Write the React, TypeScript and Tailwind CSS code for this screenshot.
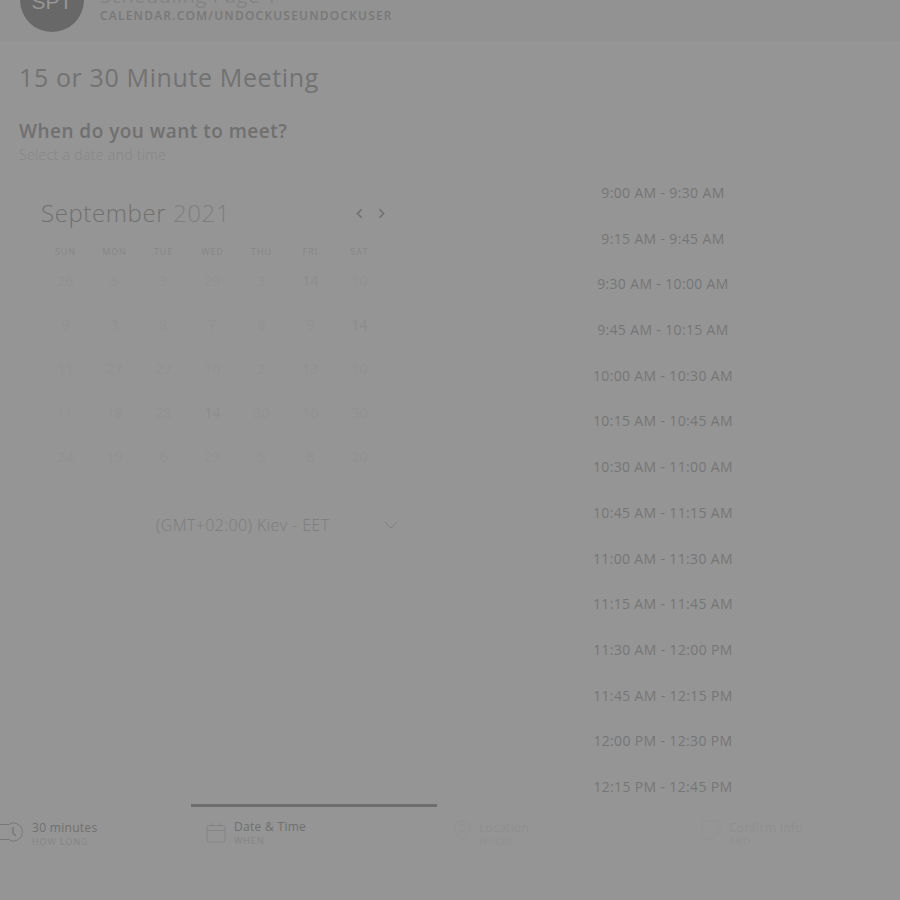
import type { ReactNode } from "react";

const weekdays = ["SUN", "MON", "TUE", "WED", "THU", "FRI", "SAT"];

const weeks = [
  [26, 8, 3, 29, 3, 14, 10],
  [9, 3, 8, 7, 8, 9, 14],
  [11, 27, 27, 10, 2, 13, 10],
  [11, 18, 28, 14, 30, 16, 30],
  [24, 19, 6, 23, 5, 8, 20],
];

const slots = [
  "9:00 AM - 9:30 AM",
  "9:15 AM - 9:45 AM",
  "9:30 AM - 10:00 AM",
  "9:45 AM - 10:15 AM",
  "10:00 AM - 10:30 AM",
  "10:15 AM - 10:45 AM",
  "10:30 AM - 11:00 AM",
  "10:45 AM - 11:15 AM",
  "11:00 AM - 11:30 AM",
  "11:15 AM - 11:45 AM",
  "11:30 AM - 12:00 PM",
  "11:45 AM - 12:15 PM",
  "12:00 PM - 12:30 PM",
  "12:15 PM - 12:45 PM",
];

function Chevron({ d, className }: { d: string; className: string }) {
  return (
    <svg viewBox="0 0 14 14" className={className} fill="none" stroke="currentColor" aria-hidden="true">
      <path d={d} />
    </svg>
  );
}

function Step({
  icon,
  title,
  caption,
  className,
  captionClass,
}: {
  icon: ReactNode;
  title: string;
  caption: string;
  className: string;
  captionClass: string;
}) {
  return (
    <button type="button" className={`flex items-start text-left ${className}`}>
      {icon}
      <span className="flex flex-col">
        <span className="text-xs leading-4 font-medium tracking-wide">{title}</span>
        <span className={`text-[9px] leading-3 tracking-widest ${captionClass}`}>{caption}</span>
      </span>
    </button>
  );
}

export default function App() {
  return (
    <div className="flex min-h-screen flex-col overflow-hidden bg-[#959595] font-['Open_Sans','Noto_Sans',sans-serif] text-[#707070]">
      <header className="flex h-[41px] items-end gap-4 overflow-hidden bg-[#929292] px-5 pb-[9px]">
        <div className="flex size-16 shrink-0 items-center justify-center rounded-full bg-[#686868] pt-1 font-['Liberation_Sans',sans-serif] text-[21px] font-medium text-[#969696]">
          SPT
        </div>
        <div className="pb-2">
          <div className="text-xl leading-6 tracking-wide text-[#848484]">Scheduling Page 1</div>
          <a href="#page" className="block text-xs leading-4 font-semibold tracking-widest text-[#787878]">
            CALENDAR.COM/UNDOCKUSEUNDOCKUSER
          </a>
        </div>
      </header>

      <main className="flex-1 px-[19px] pt-5 pb-1">
        <h1 className="text-[25px] leading-8 tracking-wide text-[#727272]">15 or 30 Minute Meeting</h1>
        <h2 className="mt-[26px] text-[19px] leading-6 font-semibold tracking-wide">When do you want to meet?</h2>
        <p className="text-sm leading-6 font-light tracking-wide text-[#868686]">Select a date and time</p>

        <div className="flex items-start">
          <section className="w-[45%] pt-[30px] pl-[22px]" aria-label="Calendar">
            <div className="flex items-center justify-between">
              <h3 className="text-2xl leading-8 font-light tracking-wide">
                September <span className="text-[#7e7e7e]">2021</span>
              </h3>
              <div className="mr-[18px] flex gap-2">
                <button type="button" aria-label="Previous month">
                  <Chevron d="M10 3 6 7l4 4" className="size-[15px] stroke-[1.5]" />
                </button>
                <button type="button" aria-label="Next month">
                  <Chevron d="m5 3 4 4-4 4" className="size-[15px] stroke-[1.5]" />
                </button>
              </div>
            </div>
            <table className="mt-3 w-[343px] table-fixed text-center">
              <thead>
                <tr className="h-[22px]">
                  {weekdays.map((day) => (
                    <th key={day} scope="col" className="text-[9px] font-normal tracking-widest text-[#868686]">
                      {day}
                    </th>
                  ))}
                </tr>
              </thead>
              <tbody>
                {weeks.map((week, row) => (
                  <tr key={row} className="h-11 align-top">
                    {week.map((day, col) => (
                      <td key={col}>
                        <button
                          type="button"
                          className={`text-sm leading-9 ${day === 14 ? "text-[#8c8c8c]" : "text-[#919191]"}`}
                        >
                          {day}
                        </button>
                      </td>
                    ))}
                  </tr>
                ))}
              </tbody>
            </table>
            <label className="mt-7 flex items-center pl-[115px]">
              <span className="sr-only">Time zone</span>
              <select className="w-[228px] appearance-none bg-transparent text-base leading-7 font-light tracking-wide text-[#7c7c7c]">
                <option>(GMT+02:00) Kiev - EET</option>
              </select>
              <Chevron d="m1 4 6 6 6-6" className="size-[14px] shrink-0 text-[#7f7f7f]" />
            </label>
          </section>

          <section
            className="mt-[14px] flex h-[618px] flex-1 flex-col items-center justify-between pl-[38px]"
            aria-label="Available times"
          >
            {slots.map((slot) => (
              <button key={slot} type="button" className="text-sm leading-6 tracking-wide text-[#757575]">
                {slot}
              </button>
            ))}
          </section>
        </div>
      </main>

      <nav className="grid h-24 grid-cols-[191fr_246fr_246fr_217fr]" aria-label="Booking steps">
        <Step
          className="border-t-2 border-transparent pt-[14px]"
          captionClass="text-[#858585]"
          title="30 minutes"
          caption="HOW LONG"
          icon={
            <svg viewBox="0 0 24 24" className="mr-2 size-6 text-[#787878]" fill="none" stroke="currentColor" aria-hidden="true">
              <path d="M0 4.5h9C10.5 3.5 12 3 13.5 3a9 9 0 0 1 0 18C12 21 10.5 20.5 9 19.5H0" />
              <path d="M13 7v6l3 3" strokeWidth="1.5" />
            </svg>
          }
        />
        <Step
          className="border-t-[3px] border-[#6d6d6d] pt-3 pl-[15px]"
          captionClass="text-[#838383]"
          title="Date & Time"
          caption="WHEN"
          icon={
            <svg viewBox="0 0 20 20" className="mt-1 mr-2 size-5 text-[#848484]" fill="none" stroke="currentColor" aria-hidden="true">
              <rect x="1" y="2.5" width="18" height="16.5" rx="2" />
              <path d="M1 7.5h18M5.5 0v3M14.5 0v3" />
            </svg>
          }
        />
        <Step
          className="border-t-2 border-[#949494] pt-[14px] pl-4 text-[#8e8e8e]"
          captionClass="text-[#909090]"
          title="Location"
          caption="WHERE"
          icon={
            <svg viewBox="0 0 18 21" className="mr-2 h-[21px] w-[18px] text-[#919191]" fill="none" stroke="currentColor" aria-hidden="true">
              <path d="M9 20C6 16 1 12 1 8a8 7 0 0 1 16 0c0 4-5 8-8 12Z" />
              <circle cx="9" cy="8" r="3.5" />
            </svg>
          }
        />
        <Step
          className="border-t-2 border-[#949494] pt-[14px] pl-[18px] text-[#8e8e8e]"
          captionClass="text-[#909090]"
          title="Confirm Info"
          caption="AND"
          icon={
            <svg viewBox="0 0 20 20" className="mr-2 size-5 text-[#919191]" fill="none" stroke="currentColor" aria-hidden="true">
              <path d="M3 1h14a2 2 0 0 1 2 2v9l-7 7H3a2 2 0 0 1-2-2V3a2 2 0 0 1 2-2Z" />
              <path d="M12 19v-5a2 2 0 0 1 2-2h5" />
            </svg>
          }
        />
      </nav>
    </div>
  );
}
